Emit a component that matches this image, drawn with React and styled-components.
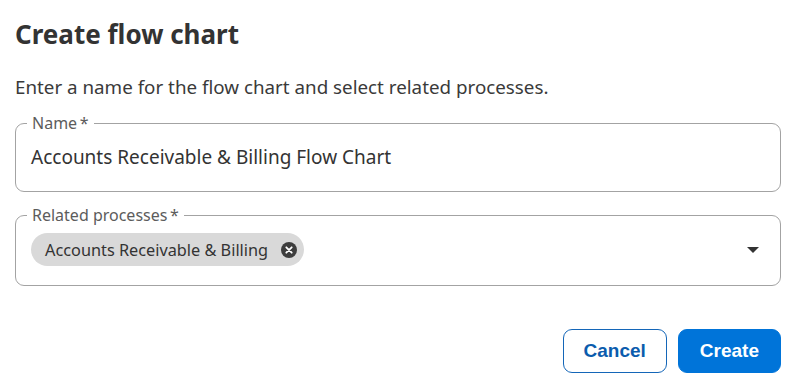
import React from "react";
import styled, { createGlobalStyle } from "styled-components";

const Global = createGlobalStyle`
  html, body { margin: 0; padding: 0; background: #fff; }
  body { font-family: "Noto Sans", "Open Sans", sans-serif; color: #333; }
  * { box-sizing: border-box; }
`;

const Dialog = styled.div`
  width: 796px;
  padding: 18px 15px 0 15px;
  display: flex;
  flex-direction: column;
`;

const Title = styled.h1`
  margin: 0;
  font-size: 26px;
  line-height: 32px;
  font-weight: 700;
  color: #333;
`;

const Subtitle = styled.p`
  margin: 25px 0 16px 0;
  font-size: 18.8px;
  line-height: 24px;
  color: #3a3a3a;
`;

const Field = styled.fieldset`
  margin: 0 0 ${(p) => p.$gap || 0}px 0;
  padding: ${(p) => p.$pt}px 15px ${(p) => p.$pb}px 15px;
  border: 1px solid #a3a3a3;
  border-radius: 9px;
  display: flex;
  align-items: center;
`;

const Legend = styled.legend`
  margin-left: -4px;
  padding: 0 5px;
  font-size: 16px;
  line-height: 16px;
  color: #5c5c5c;
`;

const Value = styled.div`
  flex: 1;
  display: flex;
  align-items: center;
  font-size: 19px;
  line-height: 24px;
  color: #333;
`;

const Chip = styled.div`
  display: inline-flex;
  align-items: center;
  gap: 13px;
  height: 33px;
  padding: 0 7px 0 14px;
  border-radius: 17px;
  background: #d9d9d9;
  font-size: 16.3px;
  color: #333;
`;

const ChipClose = styled.span`
  width: 16px;
  height: 16px;
  border-radius: 50%;
  background: #3d3d3d;
  display: inline-flex;
  align-items: center;
  justify-content: center;
`;

const Caret = styled.span`
  width: 0;
  height: 0;
  border-left: 6px solid transparent;
  border-right: 6px solid transparent;
  border-top: 6px solid #333;
  margin-right: 6px;
`;

const Actions = styled.div`
  display: flex;
  justify-content: flex-end;
  gap: 11px;
  margin-top: 43px;
`;

const Button = styled.button`
  height: 44px;
  padding: 0 ${(p) => (p.$primary ? 21 : 20)}px;
  border-radius: 9px;
  border: 1px solid ${(p) => (p.$primary ? "#0074d9" : "#1466b8")};
  background: ${(p) => (p.$primary ? "#0074d9" : "#fff")};
  color: ${(p) => (p.$primary ? "#fff" : "#0b5cad")};
  font-family: "Liberation Sans", Arial, sans-serif;
  font-weight: 700;
  font-size: 19px;
  cursor: pointer;
`;

export default function App() {
  return (
    <>
      <Global />
      <Dialog>
        <Title>Create flow chart</Title>
        <Subtitle>Enter a name for the flow chart and select related processes.</Subtitle>
        <Field $pt={14} $pb={22} $gap={15}>
          <Legend>Name{"\u2009"}*</Legend>
          <Value>Accounts Receivable &amp; Billing Flow Chart</Value>
        </Field>
        <Field $pt={10} $pb={19}>
          <Legend>Related processes{"\u2009"}*</Legend>
          <Value>
            <Chip>
              Accounts Receivable &amp; Billing
              <ChipClose>
                <svg width="8" height="8" viewBox="0 0 8 8">
                  <path d="M1.3 1.3 L6.7 6.7 M6.7 1.3 L1.3 6.7" stroke="#fff" strokeWidth="1.8" strokeLinecap="round" />
                </svg>
              </ChipClose>
            </Chip>
          </Value>
          <Caret />
        </Field>
        <Actions>
          <Button>Cancel</Button>
          <Button $primary>Create</Button>
        </Actions>
      </Dialog>
    </>
  );
}
